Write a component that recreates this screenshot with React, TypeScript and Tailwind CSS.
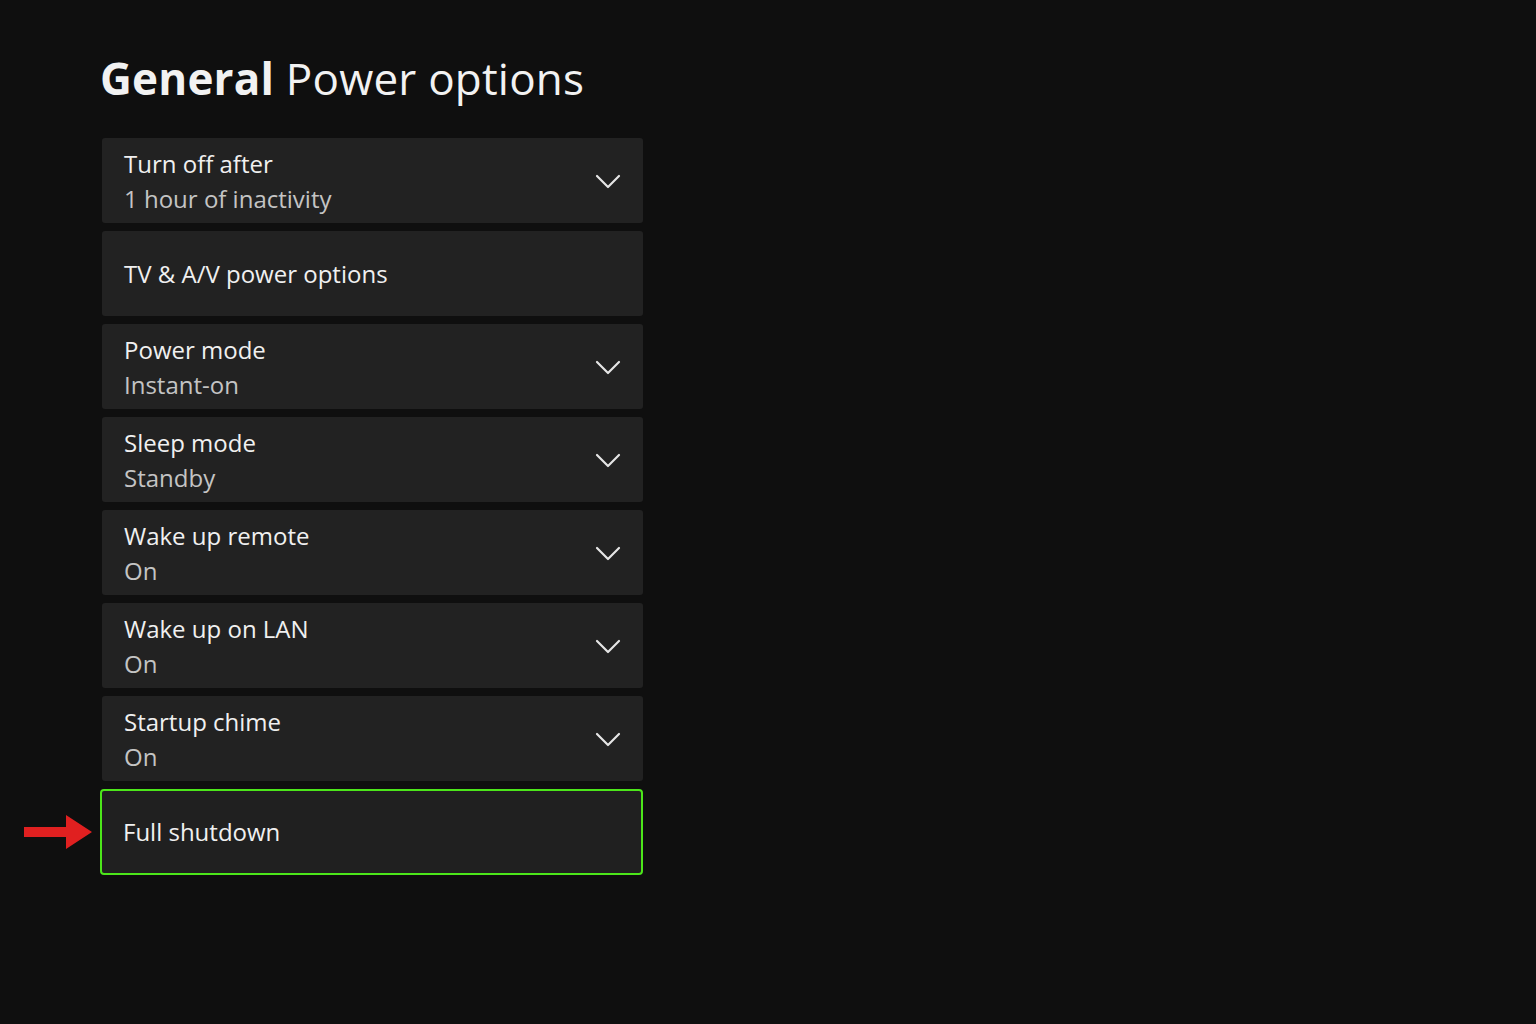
const rows = [
  { title: "Turn off after", sub: "1 hour of inactivity", chevron: true },
  { title: "TV & A/V power options" },
  { title: "Power mode", sub: "Instant-on", chevron: true },
  { title: "Sleep mode", sub: "Standby", chevron: true },
  { title: "Wake up remote", sub: "On", chevron: true },
  { title: "Wake up on LAN", sub: "On", chevron: true },
  { title: "Startup chime", sub: "On", chevron: true },
];

const Chevron = () => (
  <svg width="26" height="16" viewBox="0 0 26 16" fill="none" stroke="#e5e5e5" strokeWidth="2.2" strokeLinecap="round" strokeLinejoin="round">
    <path d="M2 3l11 11L24 3" />
  </svg>
);

export default function App() {
  return (
    <div className="w-[1536px] h-[1024px] bg-[#0f0f0f] text-white px-[100px] pt-[50px]" style={{ fontFamily: '"Open Sans", "Noto Sans", sans-serif' }}>
      <h1 className="text-[44px] leading-[56px] text-[#f2f2f2] tracking-[0.2px]">
        <span className="font-bold">General</span> <span className="font-normal">Power options</span>
      </h1>
      <div className="mt-[32px] w-[543px] flex flex-col gap-[8px]">
        {rows.map((r) => (
          <div key={r.title} className="ml-[2px] h-[85px] rounded-[3px] bg-[#222222] flex items-center justify-between pl-[22px] pr-[22px]">
            <div className="flex flex-col">
              <span className="text-[24px] leading-[35px] text-[#f0f0f0]">{r.title}</span>
              {r.sub && <span className="text-[24px] leading-[35px] text-[#c4c4c4]">{r.sub}</span>}
            </div>
            {r.chevron && <Chevron />}
          </div>
        ))}
        <div className="relative">
          <svg className="absolute left-[-76px] top-[24px]" width="70" height="38" viewBox="0 0 70 38">
            <path d="M0 14h42V2l26 17-26 17V24H0z" fill="#e02020" />
          </svg>
          <div className="h-[86px] rounded-[4px] bg-[#202020] border-2 border-[#4ce61a] flex items-center pl-[21px]">
            <span className="text-[24px] text-[#f0f0f0]">Full shutdown</span>
          </div>
        </div>
      </div>
    </div>
  );
}
